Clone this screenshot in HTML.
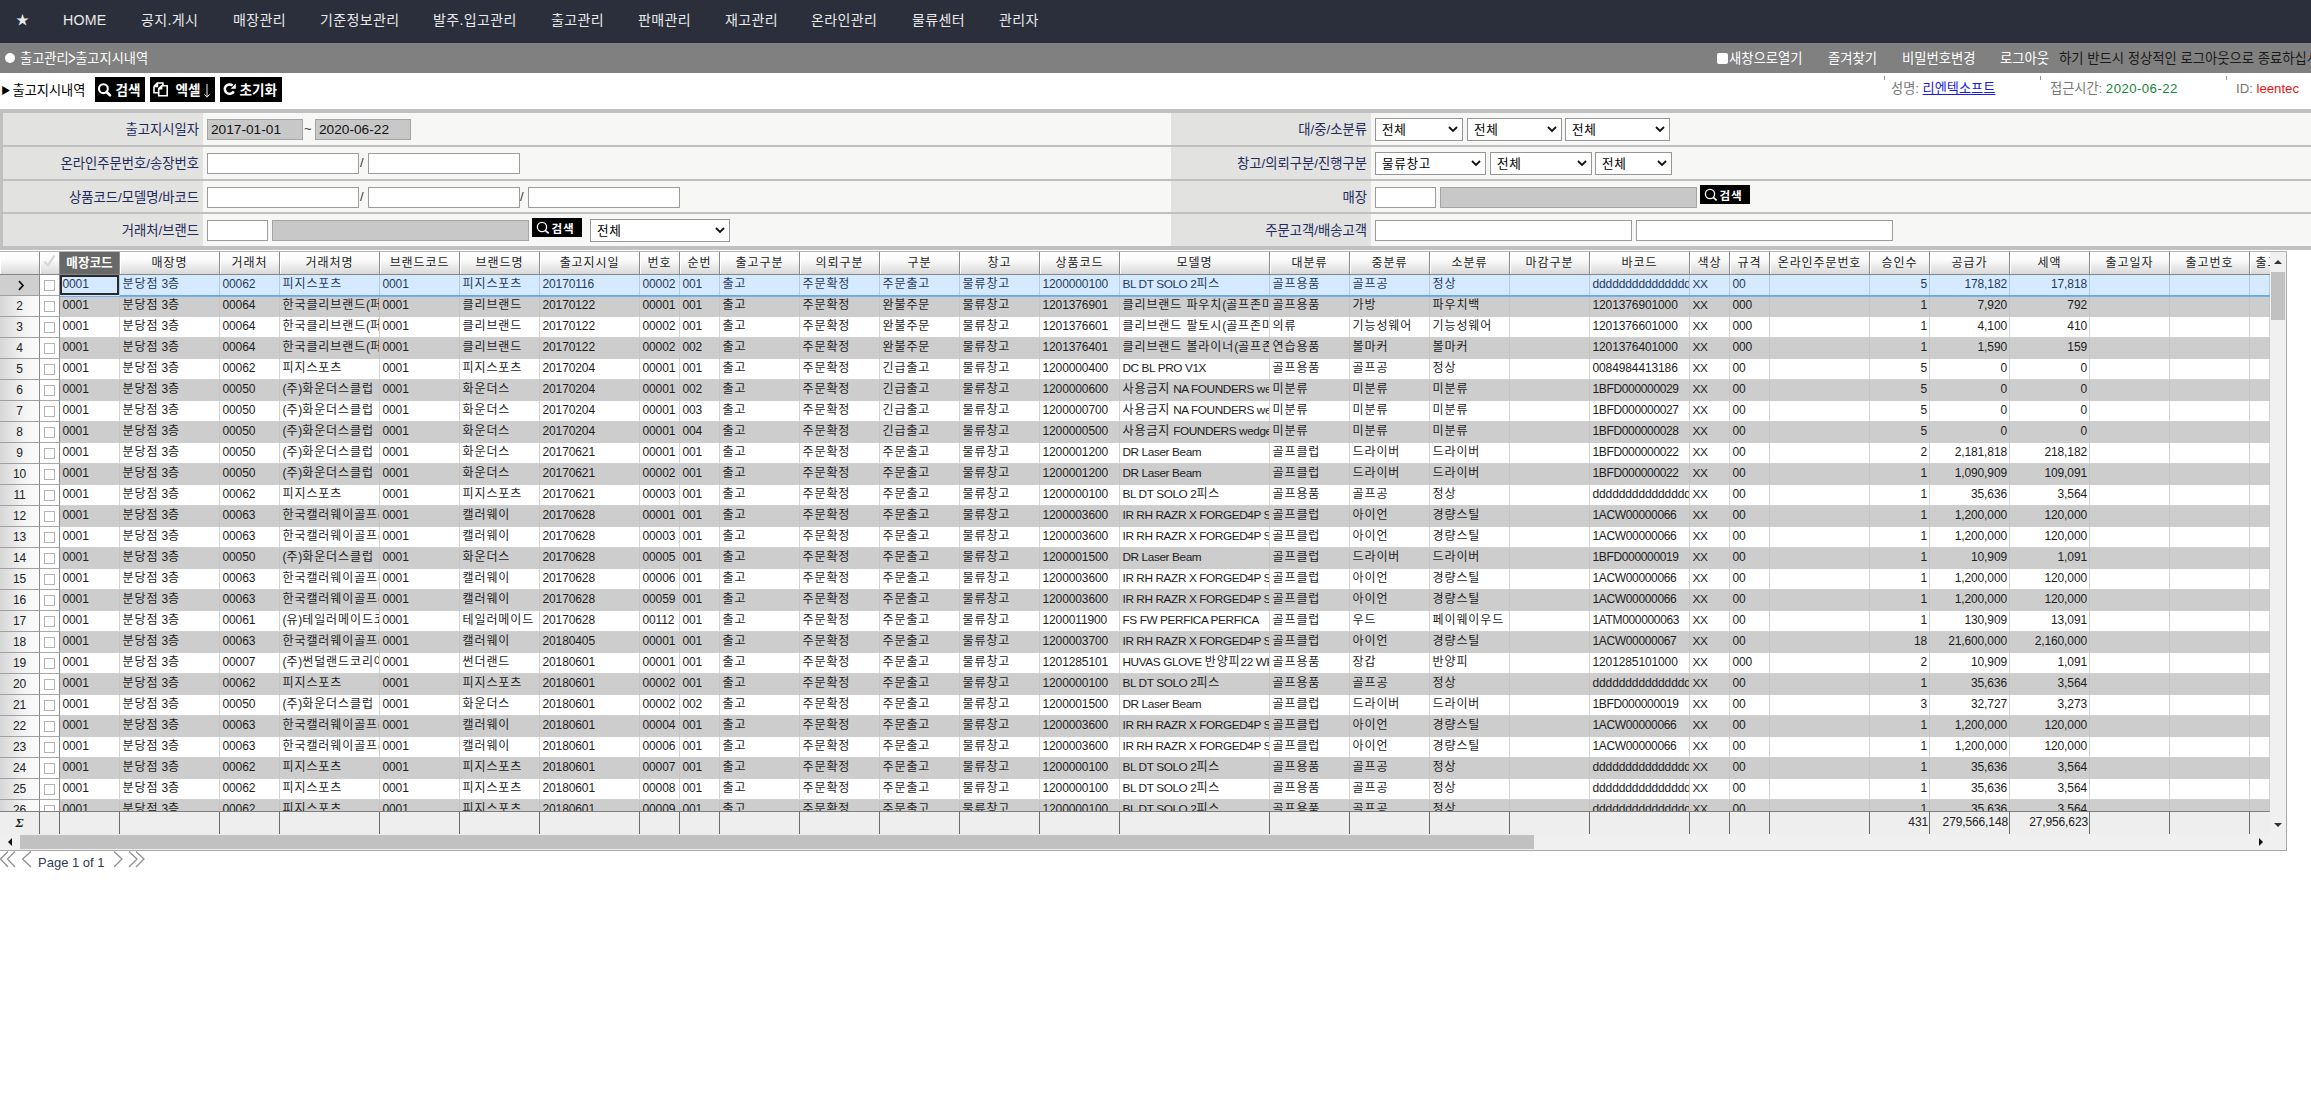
<!DOCTYPE html>
<html lang="ko"><head><meta charset="utf-8"><title>출고지시내역</title>
<style>
*{box-sizing:border-box}
html,body{margin:0;padding:0}
body{width:2311px;height:1105px;overflow:hidden;background:#fff;position:relative;font:13px "Liberation Sans","Noto Sans CJK KR",sans-serif;color:#000}
i{font-style:normal}
.abs{position:absolute;white-space:nowrap}
/* nav */
#nav{position:absolute;left:0;top:0;width:2311px;height:43px;background:#2b2f3b}
#nav a{position:absolute;top:0;height:43px;line-height:40px;color:#e9e9e9;font-size:14px;letter-spacing:0.35px;white-space:nowrap;text-decoration:none}
#nav a.en{letter-spacing:0.2px;font-size:14.2px}
/* grey bar */
#bar{position:absolute;left:0;top:43px;width:2311px;height:30px;background:#808080;color:#fff;font-size:13.33px;line-height:31px}
#bar span{position:absolute;top:0;white-space:nowrap}
#bar .dot{left:5px;top:10px;width:10px;height:10px;border-radius:50%;background:#fff}
#bar .cb{left:1717px;top:10px;width:11px;height:11px;background:#fff;border-radius:2px}
#bar .mq{color:#1a1a1a}
#bar .gt{position:static;display:inline-block;transform:scale(0.95,1.5);margin:0 -0.5px}
/* toolbar */
#tool{position:absolute;left:0;top:73px;width:2311px;height:36px;font-size:13.2px;line-height:35px}
#tool .ttl{position:absolute;left:0;top:0;white-space:nowrap}
.btn{position:absolute;top:4px;height:25px;background:#000;color:#fff;font-weight:bold;font-size:13.6px;line-height:24px;white-space:nowrap}
.btn svg{position:absolute}
.btn span{position:absolute;top:2px;margin-left:-0.5px}
#tool .ui{position:absolute;top:0;font-size:13.2px;color:#777;white-space:nowrap;line-height:32.5px}
#tool .ui .d{letter-spacing:0.45px}
#tool .tick{position:absolute;top:3px;width:1px;height:4px;background:#999}
/* filter */
#flt{position:absolute;left:0;top:109px;width:2311px;height:141px;background:#c0c0c0}
#flt .lb{position:absolute;height:32px;background:#e2e2e0;color:#222a5c;font-size:13.33px;line-height:34px;text-align:right;padding-right:4px;white-space:nowrap}
#flt .vl{position:absolute;height:32px;background:#f7f7f5}
#flt input, #flt .in{position:absolute;height:21px;border:1px solid #9c9c9c;background:#fff;font:13.33px "Liberation Sans","Noto Sans CJK KR",sans-serif;padding:0 0 0 3px;margin:0;color:#111;line-height:19px;border-radius:0;outline:0}
#flt .in.ro{background:#c8c8c8;border-color:#a4a4a4;font-size:13.7px}
#flt .sl{position:absolute;height:23px;border:1px solid #969696;background:#fff;font-size:12.6px;letter-spacing:0.7px;line-height:22.5px;padding-left:6px;color:#000;white-space:nowrap;border-radius:0}
#flt .sl svg{position:absolute;right:4px;top:7px}
#flt .sep{position:absolute;font-size:13px;color:#333;line-height:20px}
.sbtn{position:absolute;height:19px;width:50px;background:#000;color:#fff;font-weight:bold;font-size:11.6px;letter-spacing:0.8px;line-height:18px;white-space:nowrap}
.sbtn svg{position:absolute;left:4px;top:3px}
.sbtn span{position:absolute;left:19.5px;top:1.5px}
/* grid */
#grid{position:absolute;left:0;top:251px;width:2287px;height:600px;border-top:1px solid #b4b4b4;border-right:1px solid #a8a8a8;border-bottom:1px solid #a8a8a8;background:#fff;overflow:hidden;font-size:13px}
#grid i.n{font-size:12px;letter-spacing:-0.12px}
#grid i.m{font-size:12px;letter-spacing:-0.35px}
#grid i.a{font-size:11.8px;letter-spacing:-0.4px}
.hd{position:absolute;left:0;top:0;width:2270px;height:23px;overflow:hidden;z-index:3;border-bottom:1px solid #868686;background:linear-gradient(#fff,#fdfdfd 30%,#dcdcdc)}
.hc{position:absolute;top:0;height:22px;border-right:1px solid #8c8c8c;box-shadow:inset 1px 0 0 #fff;text-align:center;line-height:22px;white-space:nowrap;overflow:hidden;color:#222;font-size:12px;letter-spacing:0.9px;background:linear-gradient(#ffffff,#fbfbfb 35%,#d9d9d9)}
.hc.sel{background:#686868;color:#fff;font-weight:bold;letter-spacing:0;box-shadow:none;font-size:12.6px}
.hc.chk svg{position:absolute;left:0;top:0}
.bd{position:absolute;left:0;top:23px;width:2270px;height:536px;overflow:hidden;z-index:2}
.r{position:absolute;left:0;width:2270px;height:21px}
.r.e{background:#cdcdcd}
.r.s{background:#d6eaff}
.rh{position:absolute;left:0;top:0;width:40px;height:21px;border-right:1px solid #8a8a8a;border-bottom:1px solid #a0a0a0;background:linear-gradient(90deg,#d6d6d6,#f3f3f3 60%,#fcfcfc);text-align:center;line-height:20px;color:#222}
.r.s .rh{background:#cfcfcf}
.rh svg{position:absolute;left:16px;top:5px}
.ck{position:absolute;left:40px;top:0;width:20px;height:21px;background:#fff;border-right:1px solid #8a8a8a;border-bottom:1px solid #a8a8a8}
.ck b{position:absolute;left:4px;top:5px;width:11px;height:11px;border:1px solid #b4b4b4;background:#fff}
.c{position:absolute;top:0;height:21px;border-right:1px solid #d4d4d4;border-bottom:1px solid #d0d0d0;font-size:12px;letter-spacing:0.9px;padding:0 0 0 2.5px;line-height:18px;white-space:nowrap;overflow:hidden;color:#1c1c1c}
.r.e .c{border-right-color:#c5c5c5;border-bottom-color:#cdcdcd}
.r.s .c{border-right-color:#b4cbe4;border-bottom-color:#d6eaff;color:#1d3a5c}
.c.ra{text-align:right;padding:0 2px 0 0}
.c.foc{box-shadow:inset 0 0 0 2px #2a2a2a;z-index:4}
.selline{position:absolute;left:60px;top:20px;z-index:3;width:2210px;height:2px;background:linear-gradient(#62a2e5,#7fb4ec)}
.ft{position:absolute;left:0;top:559px;width:2270px;height:24px;background:#eee;border-top:1px solid #808080}
.fc{position:absolute;top:0;height:22px;border-right:1px solid #6a6a6a;line-height:20px;white-space:nowrap;overflow:hidden;color:#222}
.fc.ra{text-align:right;padding-right:1px}
.fc.last{border-right:0}
.sig{font:italic bold 13px "Liberation Serif",serif;line-height:22px}
.vs{position:absolute;left:2270px;top:0;width:16px;height:583px;background:#f0f0f0}
.vs .th{position:absolute;left:1px;top:20px;width:14px;height:48px;background:#c1c1c1}
.hs{position:absolute;left:0;top:583px;width:2286px;height:16px;background:#f0f0f0}
.hs .th{position:absolute;left:20px;top:0;width:1514px;height:14px;background:#c1c1c1}
.ar{position:absolute;width:0;height:0}
.ar.up{left:4px;top:8px;border-left:4px solid transparent;border-right:4px solid transparent;border-bottom:4px solid #333}
.ar.dn{left:4px;top:571px;border-left:4px solid transparent;border-right:4px solid transparent;border-top:4px solid #333}
.ar.lf{left:8px;top:3px;border-top:4px solid transparent;border-bottom:4px solid transparent;border-right:4px solid #111}
.ar.rt{left:2259px;top:3px;border-top:4px solid transparent;border-bottom:4px solid transparent;border-left:4px solid #111}
/* pager */
#pg{position:absolute;left:0;top:851px;width:300px;height:20px}
#pg svg{position:absolute;left:0;top:0}
#pg span{position:absolute;left:38px;top:2px;font:13px "Liberation Sans",sans-serif;color:#333c52;line-height:20px;white-space:nowrap}

</style></head>
<body>
<div id="nav">
<a style="left:16px;font-size:13px">★</a>
<a class="en" style="left:63px">HOME</a>
<a style="left:141px">공지.게시</a>
<a style="left:233px">매장관리</a>
<a style="left:320px">기준정보관리</a>
<a style="left:433px">발주.입고관리</a>
<a style="left:551px">출고관리</a>
<a style="left:638px">판매관리</a>
<a style="left:725px">재고관리</a>
<a style="left:811px">온라인관리</a>
<a style="left:912px">물류센터</a>
<a style="left:999px">관리자</a>
</div>
<div id="bar">
<span class="dot"></span>
<span style="left:20px;font-size:13.2px">출고관리<span class="gt">&gt;</span>출고지시내역</span>
<span class="cb"></span>
<span style="left:1729px">새창으로열기</span>
<span style="left:1828px">즐겨찾기</span>
<span style="left:1902px">비밀번호변경</span>
<span style="left:2000px">로그아웃</span>
<span class="mq" style="left:2059px">하기 반드시 정상적인 로그아웃으로 종료하십시오.</span>
</div>
<div id="tool">
<div class="ttl"><i style="font-size:9.5px;position:relative;top:-1px;margin-right:2px;margin-left:1px">▶</i>출고지시내역</div>
<div class="btn" style="left:95px;width:50px"><svg style="left:0;top:0" width="50" height="25" viewBox="0 0 50 25"><circle cx="8.4" cy="11.7" r="4.4" fill="none" stroke="#fff" stroke-width="2.1"/><path d="M11.6 15 L15 18.3" stroke="#fff" stroke-width="2.6" stroke-linecap="round"/></svg><span style="left:21px">검색</span></div>
<div class="btn" style="left:150px;width:65px"><svg style="left:0;top:0" width="65" height="25" viewBox="0 0 65 25"><path d="M4 9.4 L7.4 6 H12.9 V9 M4 9.4 H7.4 V6 M4 9.4 V15.8 H8.6" fill="none" stroke="#fff" stroke-width="1.6"/><path d="M8.7 11.6 L11.6 8.8 H17.2 V18.8 H8.7 Z M8.7 11.6 H11.6 V8.8" fill="none" stroke="#fff" stroke-width="1.6"/><path d="M57 7 V19.8 M54.4 17.4 L57 20.2 L59.6 17.4" fill="none" stroke="#e8f4f4" stroke-width="1"/></svg><span style="left:26px">엑셀</span></div>
<div class="btn" style="left:220px;width:62px"><svg style="left:0;top:0" width="62" height="25" viewBox="0 0 62 25"><path d="M13.7 14.3 A4.7 4.7 0 1 1 12.6 8.5" fill="none" stroke="#fff" stroke-width="2.5"/><path d="M15.8 6.6 V11.8 H10.6 Z" fill="#fff"/></svg><span style="left:20px">초기화</span></div>
<i class="tick" style="left:1884px"></i><i class="tick" style="left:2040px"></i><i class="tick" style="left:2226px"></i>
<div class="ui" style="left:1891px">성명: <span style="color:#1a1ae6;text-decoration:underline">리엔텍소프트</span></div>
<div class="ui" style="left:2050px">접근시간: <span class="d" style="color:#16883a">2020-06-22</span></div>
<div class="ui" style="left:2236px">ID: <span style="color:#f01010">leentec</span></div>
</div>
<div id="flt">
<!-- left labels -->
<div class="lb" style="left:3px;top:4px;width:200px">출고지시일자</div><div class="vl" style="left:203px;top:4px;width:968px"></div>
<div class="lb" style="left:3px;top:38px;width:200px">온라인주문번호/송장번호</div><div class="vl" style="left:203px;top:38px;width:968px"></div>
<div class="lb" style="left:3px;top:72px;width:200px;height:31px">상품코드/모델명/바코드</div><div class="vl" style="left:203px;top:72px;width:968px;height:31px"></div>
<div class="lb" style="left:3px;top:105px;width:200px">거래처/브랜드</div><div class="vl" style="left:203px;top:105px;width:968px"></div>
<!-- right labels -->
<div class="lb" style="left:1171px;top:4px;width:200px">대/중/소분류</div><div class="vl" style="left:1371px;top:4px;width:940px"></div>
<div class="lb" style="left:1171px;top:38px;width:200px">창고/의뢰구분/진행구분</div><div class="vl" style="left:1371px;top:38px;width:940px"></div>
<div class="lb" style="left:1171px;top:72px;width:200px;height:31px">매장</div><div class="vl" style="left:1371px;top:72px;width:940px;height:31px"></div>
<div class="lb" style="left:1171px;top:105px;width:200px">주문고객/배송고객</div><div class="vl" style="left:1371px;top:105px;width:940px"></div>
<!-- row1 left -->
<div class="in ro" style="left:207px;top:10px;width:96px">2017-01-01</div><div class="sep" style="left:304px;top:10px">~</div><div class="in ro" style="left:315px;top:10px;width:96px">2020-06-22</div>
<!-- row2 left -->
<div class="in" style="left:207px;top:44px;width:152px"></div><div class="sep" style="left:360px;top:44px">/</div><div class="in" style="left:368px;top:44px;width:152px"></div>
<!-- row3 left -->
<div class="in" style="left:207px;top:78px;width:152px"></div><div class="sep" style="left:360px;top:78px">/</div><div class="in" style="left:368px;top:78px;width:152px"></div><div class="sep" style="left:520px;top:78px">/</div><div class="in" style="left:528px;top:78px;width:152px"></div>
<!-- row4 left -->
<div class="in" style="left:207px;top:111px;width:61px"></div><div class="in ro" style="left:272px;top:111px;width:257px"></div>
<div class="sbtn" style="left:532px;top:109px"><svg width="14" height="14" viewBox="0 0 14 14"><circle cx="6" cy="6" r="4.6" fill="none" stroke="#fff" stroke-width="1.3"/><path d="M9.3 9.3 L12.7 12.3" stroke="#fff" stroke-width="1.6"/></svg><span>검색</span></div>
<div class="sl" style="left:590px;top:110px;width:140px">전체<svg width="10" height="7" viewBox="0 0 10 7"><path d="M1 1 L5 5 L9 1" fill="none" stroke="#111" stroke-width="1.8"/></svg></div>
<!-- row1 right -->
<div class="sl" style="left:1375px;top:9px;width:88px">전체<svg width="10" height="7" viewBox="0 0 10 7"><path d="M1 1 L5 5 L9 1" fill="none" stroke="#111" stroke-width="1.8"/></svg></div>
<div class="sl" style="left:1467px;top:9px;width:95px">전체<svg width="10" height="7" viewBox="0 0 10 7"><path d="M1 1 L5 5 L9 1" fill="none" stroke="#111" stroke-width="1.8"/></svg></div>
<div class="sl" style="left:1565px;top:9px;width:105px">전체<svg width="10" height="7" viewBox="0 0 10 7"><path d="M1 1 L5 5 L9 1" fill="none" stroke="#111" stroke-width="1.8"/></svg></div>
<!-- row2 right -->
<div class="sl" style="left:1375px;top:43px;width:111px">물류창고<svg width="10" height="7" viewBox="0 0 10 7"><path d="M1 1 L5 5 L9 1" fill="none" stroke="#111" stroke-width="1.8"/></svg></div>
<div class="sl" style="left:1490px;top:43px;width:102px">전체<svg width="10" height="7" viewBox="0 0 10 7"><path d="M1 1 L5 5 L9 1" fill="none" stroke="#111" stroke-width="1.8"/></svg></div>
<div class="sl" style="left:1595px;top:43px;width:77px">전체<svg width="10" height="7" viewBox="0 0 10 7"><path d="M1 1 L5 5 L9 1" fill="none" stroke="#111" stroke-width="1.8"/></svg></div>
<!-- row3 right -->
<div class="in" style="left:1375px;top:78px;width:61px"></div><div class="in ro" style="left:1440px;top:78px;width:257px"></div>
<div class="sbtn" style="left:1700px;top:76px"><svg width="14" height="14" viewBox="0 0 14 14"><circle cx="6" cy="6" r="4.6" fill="none" stroke="#fff" stroke-width="1.3"/><path d="M9.3 9.3 L12.7 12.3" stroke="#fff" stroke-width="1.6"/></svg><span>검색</span></div>
<!-- row4 right -->
<div class="in" style="left:1375px;top:111px;width:257px"></div><div class="in" style="left:1636px;top:111px;width:257px"></div>
</div>
<div id="grid">
<div class="hd">
<div class="hc" style="left:0;width:40px"></div>
<div class="hc chk" style="left:40px;width:20px"><svg width="20" height="22" viewBox="0 0 20 22"><path d="M4.5 9.8 L8 13.4 L14.4 3.6" fill="none" stroke="#d6d6d6" stroke-width="2.1"/></svg></div>
<div class="hc sel" style="left:60px;width:60px">매장코드</div>
<div class="hc" style="left:120px;width:100px">매장명</div>
<div class="hc" style="left:220px;width:60px">거래처</div>
<div class="hc" style="left:280px;width:100px">거래처명</div>
<div class="hc" style="left:380px;width:80px">브랜드코드</div>
<div class="hc" style="left:460px;width:80px">브랜드명</div>
<div class="hc" style="left:540px;width:100px">출고지시일</div>
<div class="hc" style="left:640px;width:40px">번호</div>
<div class="hc" style="left:680px;width:40px">순번</div>
<div class="hc" style="left:720px;width:80px">출고구분</div>
<div class="hc" style="left:800px;width:80px">의뢰구분</div>
<div class="hc" style="left:880px;width:80px">구분</div>
<div class="hc" style="left:960px;width:80px">창고</div>
<div class="hc" style="left:1040px;width:80px">상품코드</div>
<div class="hc" style="left:1120px;width:150px">모델명</div>
<div class="hc" style="left:1270px;width:80px">대분류</div>
<div class="hc" style="left:1350px;width:80px">중분류</div>
<div class="hc" style="left:1430px;width:80px">소분류</div>
<div class="hc" style="left:1510px;width:80px">마감구분</div>
<div class="hc" style="left:1590px;width:100px">바코드</div>
<div class="hc" style="left:1690px;width:40px">색상</div>
<div class="hc" style="left:1730px;width:40px">규격</div>
<div class="hc" style="left:1770px;width:100px">온라인주문번호</div>
<div class="hc" style="left:1870px;width:60px">승인수</div>
<div class="hc" style="left:1930px;width:80px">공급가</div>
<div class="hc" style="left:2010px;width:80px">세액</div>
<div class="hc" style="left:2090px;width:80px">출고일자</div>
<div class="hc" style="left:2170px;width:80px">출고번호</div>
<div class="hc" style="left:2250px;width:60px">출고순번</div>
</div>
<div class="bd">
<div class="r s" style="top:0px">
<div class="rh"><svg width="9" height="11" viewBox="0 0 9 11"><path d="M3 1.2 L7 5.5 L3 9.8" fill="none" stroke="#111" stroke-width="1.7"/></svg></div><div class="ck"><b></b></div>
<div class="c foc" style="left:60px;width:60px"><i class="n">0001</i></div>
<div class="c" style="left:120px;width:100px">분당점<i class="n"> 3</i>층</div>
<div class="c" style="left:220px;width:60px"><i class="n">00062</i></div>
<div class="c" style="left:280px;width:100px">피지스포츠</div>
<div class="c" style="left:380px;width:80px"><i class="n">0001</i></div>
<div class="c" style="left:460px;width:80px">피지스포츠</div>
<div class="c" style="left:540px;width:100px"><i class="n">20170116</i></div>
<div class="c" style="left:640px;width:40px"><i class="n">00002</i></div>
<div class="c" style="left:680px;width:40px"><i class="n">001</i></div>
<div class="c" style="left:720px;width:80px">출고</div>
<div class="c" style="left:800px;width:80px">주문확정</div>
<div class="c" style="left:880px;width:80px">주문출고</div>
<div class="c" style="left:960px;width:80px">물류창고</div>
<div class="c" style="left:1040px;width:80px"><i class="n">1200000100</i></div>
<div class="c" style="left:1120px;width:150px"><i class="a">BL DT SOLO 2</i>피스</div>
<div class="c" style="left:1270px;width:80px">골프용품</div>
<div class="c" style="left:1350px;width:80px">골프공</div>
<div class="c" style="left:1430px;width:80px">정상</div>
<div class="c" style="left:1510px;width:80px"></div>
<div class="c" style="left:1590px;width:100px"><i class="n">dddddddddddddddddd</i></div>
<div class="c" style="left:1690px;width:40px"><i class="a">XX</i></div>
<div class="c" style="left:1730px;width:40px"><i class="n">00</i></div>
<div class="c" style="left:1770px;width:100px"></div>
<div class="c ra" style="left:1870px;width:60px"><i class="n">5</i></div>
<div class="c ra" style="left:1930px;width:80px"><i class="n">178,182</i></div>
<div class="c ra" style="left:2010px;width:80px"><i class="n">17,818</i></div>
<div class="c" style="left:2090px;width:80px"></div>
<div class="c" style="left:2170px;width:80px"></div>
<div class="c" style="left:2250px;width:20px"></div>
</div>
<div class="r e" style="top:21px">
<div class="rh"><i class="n">2</i></div><div class="ck"><b></b></div>
<div class="c" style="left:60px;width:60px"><i class="n">0001</i></div>
<div class="c" style="left:120px;width:100px">분당점<i class="n"> 3</i>층</div>
<div class="c" style="left:220px;width:60px"><i class="n">00064</i></div>
<div class="c" style="left:280px;width:100px">한국클리브랜드<i class="n">(</i>퍼시픽<i class="n">)</i></div>
<div class="c" style="left:380px;width:80px"><i class="n">0001</i></div>
<div class="c" style="left:460px;width:80px">클리브랜드</div>
<div class="c" style="left:540px;width:100px"><i class="n">20170122</i></div>
<div class="c" style="left:640px;width:40px"><i class="n">00001</i></div>
<div class="c" style="left:680px;width:40px"><i class="n">001</i></div>
<div class="c" style="left:720px;width:80px">출고</div>
<div class="c" style="left:800px;width:80px">주문확정</div>
<div class="c" style="left:880px;width:80px">완불주문</div>
<div class="c" style="left:960px;width:80px">물류창고</div>
<div class="c" style="left:1040px;width:80px"><i class="n">1201376901</i></div>
<div class="c" style="left:1120px;width:150px">클리브랜드 파우치<i class="n">(</i>골프존마켓<i class="n">)</i></div>
<div class="c" style="left:1270px;width:80px">골프용품</div>
<div class="c" style="left:1350px;width:80px">가방</div>
<div class="c" style="left:1430px;width:80px">파우치백</div>
<div class="c" style="left:1510px;width:80px"></div>
<div class="c" style="left:1590px;width:100px"><i class="n">1201376901000</i></div>
<div class="c" style="left:1690px;width:40px"><i class="a">XX</i></div>
<div class="c" style="left:1730px;width:40px"><i class="n">000</i></div>
<div class="c" style="left:1770px;width:100px"></div>
<div class="c ra" style="left:1870px;width:60px"><i class="n">1</i></div>
<div class="c ra" style="left:1930px;width:80px"><i class="n">7,920</i></div>
<div class="c ra" style="left:2010px;width:80px"><i class="n">792</i></div>
<div class="c" style="left:2090px;width:80px"></div>
<div class="c" style="left:2170px;width:80px"></div>
<div class="c" style="left:2250px;width:20px"></div>
</div>
<div class="r o" style="top:42px">
<div class="rh"><i class="n">3</i></div><div class="ck"><b></b></div>
<div class="c" style="left:60px;width:60px"><i class="n">0001</i></div>
<div class="c" style="left:120px;width:100px">분당점<i class="n"> 3</i>층</div>
<div class="c" style="left:220px;width:60px"><i class="n">00064</i></div>
<div class="c" style="left:280px;width:100px">한국클리브랜드<i class="n">(</i>퍼시픽<i class="n">)</i></div>
<div class="c" style="left:380px;width:80px"><i class="n">0001</i></div>
<div class="c" style="left:460px;width:80px">클리브랜드</div>
<div class="c" style="left:540px;width:100px"><i class="n">20170122</i></div>
<div class="c" style="left:640px;width:40px"><i class="n">00002</i></div>
<div class="c" style="left:680px;width:40px"><i class="n">001</i></div>
<div class="c" style="left:720px;width:80px">출고</div>
<div class="c" style="left:800px;width:80px">주문확정</div>
<div class="c" style="left:880px;width:80px">완불주문</div>
<div class="c" style="left:960px;width:80px">물류창고</div>
<div class="c" style="left:1040px;width:80px"><i class="n">1201376601</i></div>
<div class="c" style="left:1120px;width:150px">클리브랜드 팔토시<i class="n">(</i>골프존마켓<i class="n">)</i></div>
<div class="c" style="left:1270px;width:80px">의류</div>
<div class="c" style="left:1350px;width:80px">기능성웨어</div>
<div class="c" style="left:1430px;width:80px">기능성웨어</div>
<div class="c" style="left:1510px;width:80px"></div>
<div class="c" style="left:1590px;width:100px"><i class="n">1201376601000</i></div>
<div class="c" style="left:1690px;width:40px"><i class="a">XX</i></div>
<div class="c" style="left:1730px;width:40px"><i class="n">000</i></div>
<div class="c" style="left:1770px;width:100px"></div>
<div class="c ra" style="left:1870px;width:60px"><i class="n">1</i></div>
<div class="c ra" style="left:1930px;width:80px"><i class="n">4,100</i></div>
<div class="c ra" style="left:2010px;width:80px"><i class="n">410</i></div>
<div class="c" style="left:2090px;width:80px"></div>
<div class="c" style="left:2170px;width:80px"></div>
<div class="c" style="left:2250px;width:20px"></div>
</div>
<div class="r e" style="top:63px">
<div class="rh"><i class="n">4</i></div><div class="ck"><b></b></div>
<div class="c" style="left:60px;width:60px"><i class="n">0001</i></div>
<div class="c" style="left:120px;width:100px">분당점<i class="n"> 3</i>층</div>
<div class="c" style="left:220px;width:60px"><i class="n">00064</i></div>
<div class="c" style="left:280px;width:100px">한국클리브랜드<i class="n">(</i>퍼시픽<i class="n">)</i></div>
<div class="c" style="left:380px;width:80px"><i class="n">0001</i></div>
<div class="c" style="left:460px;width:80px">클리브랜드</div>
<div class="c" style="left:540px;width:100px"><i class="n">20170122</i></div>
<div class="c" style="left:640px;width:40px"><i class="n">00002</i></div>
<div class="c" style="left:680px;width:40px"><i class="n">002</i></div>
<div class="c" style="left:720px;width:80px">출고</div>
<div class="c" style="left:800px;width:80px">주문확정</div>
<div class="c" style="left:880px;width:80px">완불주문</div>
<div class="c" style="left:960px;width:80px">물류창고</div>
<div class="c" style="left:1040px;width:80px"><i class="n">1201376401</i></div>
<div class="c" style="left:1120px;width:150px">클리브랜드 볼라이너<i class="n">(</i>골프존마켓<i class="n">)</i></div>
<div class="c" style="left:1270px;width:80px">연습용품</div>
<div class="c" style="left:1350px;width:80px">볼마커</div>
<div class="c" style="left:1430px;width:80px">볼마커</div>
<div class="c" style="left:1510px;width:80px"></div>
<div class="c" style="left:1590px;width:100px"><i class="n">1201376401000</i></div>
<div class="c" style="left:1690px;width:40px"><i class="a">XX</i></div>
<div class="c" style="left:1730px;width:40px"><i class="n">000</i></div>
<div class="c" style="left:1770px;width:100px"></div>
<div class="c ra" style="left:1870px;width:60px"><i class="n">1</i></div>
<div class="c ra" style="left:1930px;width:80px"><i class="n">1,590</i></div>
<div class="c ra" style="left:2010px;width:80px"><i class="n">159</i></div>
<div class="c" style="left:2090px;width:80px"></div>
<div class="c" style="left:2170px;width:80px"></div>
<div class="c" style="left:2250px;width:20px"></div>
</div>
<div class="r o" style="top:84px">
<div class="rh"><i class="n">5</i></div><div class="ck"><b></b></div>
<div class="c" style="left:60px;width:60px"><i class="n">0001</i></div>
<div class="c" style="left:120px;width:100px">분당점<i class="n"> 3</i>층</div>
<div class="c" style="left:220px;width:60px"><i class="n">00062</i></div>
<div class="c" style="left:280px;width:100px">피지스포츠</div>
<div class="c" style="left:380px;width:80px"><i class="n">0001</i></div>
<div class="c" style="left:460px;width:80px">피지스포츠</div>
<div class="c" style="left:540px;width:100px"><i class="n">20170204</i></div>
<div class="c" style="left:640px;width:40px"><i class="n">00001</i></div>
<div class="c" style="left:680px;width:40px"><i class="n">001</i></div>
<div class="c" style="left:720px;width:80px">출고</div>
<div class="c" style="left:800px;width:80px">주문확정</div>
<div class="c" style="left:880px;width:80px">긴급출고</div>
<div class="c" style="left:960px;width:80px">물류창고</div>
<div class="c" style="left:1040px;width:80px"><i class="n">1200000400</i></div>
<div class="c" style="left:1120px;width:150px"><i class="a">DC BL PRO V1X</i></div>
<div class="c" style="left:1270px;width:80px">골프용품</div>
<div class="c" style="left:1350px;width:80px">골프공</div>
<div class="c" style="left:1430px;width:80px">정상</div>
<div class="c" style="left:1510px;width:80px"></div>
<div class="c" style="left:1590px;width:100px"><i class="n">0084984413186</i></div>
<div class="c" style="left:1690px;width:40px"><i class="a">XX</i></div>
<div class="c" style="left:1730px;width:40px"><i class="n">00</i></div>
<div class="c" style="left:1770px;width:100px"></div>
<div class="c ra" style="left:1870px;width:60px"><i class="n">5</i></div>
<div class="c ra" style="left:1930px;width:80px"><i class="n">0</i></div>
<div class="c ra" style="left:2010px;width:80px"><i class="n">0</i></div>
<div class="c" style="left:2090px;width:80px"></div>
<div class="c" style="left:2170px;width:80px"></div>
<div class="c" style="left:2250px;width:20px"></div>
</div>
<div class="r e" style="top:105px">
<div class="rh"><i class="n">6</i></div><div class="ck"><b></b></div>
<div class="c" style="left:60px;width:60px"><i class="n">0001</i></div>
<div class="c" style="left:120px;width:100px">분당점<i class="n"> 3</i>층</div>
<div class="c" style="left:220px;width:60px"><i class="n">00050</i></div>
<div class="c" style="left:280px;width:100px"><i class="n">(</i>주<i class="n">)</i>화운더스클럽</div>
<div class="c" style="left:380px;width:80px"><i class="n">0001</i></div>
<div class="c" style="left:460px;width:80px">화운더스</div>
<div class="c" style="left:540px;width:100px"><i class="n">20170204</i></div>
<div class="c" style="left:640px;width:40px"><i class="n">00001</i></div>
<div class="c" style="left:680px;width:40px"><i class="n">002</i></div>
<div class="c" style="left:720px;width:80px">출고</div>
<div class="c" style="left:800px;width:80px">주문확정</div>
<div class="c" style="left:880px;width:80px">긴급출고</div>
<div class="c" style="left:960px;width:80px">물류창고</div>
<div class="c" style="left:1040px;width:80px"><i class="n">1200000600</i></div>
<div class="c" style="left:1120px;width:150px">사용금지<i class="a"> NA FOUNDERS wedge 52</i></div>
<div class="c" style="left:1270px;width:80px">미분류</div>
<div class="c" style="left:1350px;width:80px">미분류</div>
<div class="c" style="left:1430px;width:80px">미분류</div>
<div class="c" style="left:1510px;width:80px"></div>
<div class="c" style="left:1590px;width:100px"><i class="m">1BFD000000029</i></div>
<div class="c" style="left:1690px;width:40px"><i class="a">XX</i></div>
<div class="c" style="left:1730px;width:40px"><i class="n">00</i></div>
<div class="c" style="left:1770px;width:100px"></div>
<div class="c ra" style="left:1870px;width:60px"><i class="n">5</i></div>
<div class="c ra" style="left:1930px;width:80px"><i class="n">0</i></div>
<div class="c ra" style="left:2010px;width:80px"><i class="n">0</i></div>
<div class="c" style="left:2090px;width:80px"></div>
<div class="c" style="left:2170px;width:80px"></div>
<div class="c" style="left:2250px;width:20px"></div>
</div>
<div class="r o" style="top:126px">
<div class="rh"><i class="n">7</i></div><div class="ck"><b></b></div>
<div class="c" style="left:60px;width:60px"><i class="n">0001</i></div>
<div class="c" style="left:120px;width:100px">분당점<i class="n"> 3</i>층</div>
<div class="c" style="left:220px;width:60px"><i class="n">00050</i></div>
<div class="c" style="left:280px;width:100px"><i class="n">(</i>주<i class="n">)</i>화운더스클럽</div>
<div class="c" style="left:380px;width:80px"><i class="n">0001</i></div>
<div class="c" style="left:460px;width:80px">화운더스</div>
<div class="c" style="left:540px;width:100px"><i class="n">20170204</i></div>
<div class="c" style="left:640px;width:40px"><i class="n">00001</i></div>
<div class="c" style="left:680px;width:40px"><i class="n">003</i></div>
<div class="c" style="left:720px;width:80px">출고</div>
<div class="c" style="left:800px;width:80px">주문확정</div>
<div class="c" style="left:880px;width:80px">긴급출고</div>
<div class="c" style="left:960px;width:80px">물류창고</div>
<div class="c" style="left:1040px;width:80px"><i class="n">1200000700</i></div>
<div class="c" style="left:1120px;width:150px">사용금지<i class="a"> NA FOUNDERS wedge 56</i></div>
<div class="c" style="left:1270px;width:80px">미분류</div>
<div class="c" style="left:1350px;width:80px">미분류</div>
<div class="c" style="left:1430px;width:80px">미분류</div>
<div class="c" style="left:1510px;width:80px"></div>
<div class="c" style="left:1590px;width:100px"><i class="m">1BFD000000027</i></div>
<div class="c" style="left:1690px;width:40px"><i class="a">XX</i></div>
<div class="c" style="left:1730px;width:40px"><i class="n">00</i></div>
<div class="c" style="left:1770px;width:100px"></div>
<div class="c ra" style="left:1870px;width:60px"><i class="n">5</i></div>
<div class="c ra" style="left:1930px;width:80px"><i class="n">0</i></div>
<div class="c ra" style="left:2010px;width:80px"><i class="n">0</i></div>
<div class="c" style="left:2090px;width:80px"></div>
<div class="c" style="left:2170px;width:80px"></div>
<div class="c" style="left:2250px;width:20px"></div>
</div>
<div class="r e" style="top:147px">
<div class="rh"><i class="n">8</i></div><div class="ck"><b></b></div>
<div class="c" style="left:60px;width:60px"><i class="n">0001</i></div>
<div class="c" style="left:120px;width:100px">분당점<i class="n"> 3</i>층</div>
<div class="c" style="left:220px;width:60px"><i class="n">00050</i></div>
<div class="c" style="left:280px;width:100px"><i class="n">(</i>주<i class="n">)</i>화운더스클럽</div>
<div class="c" style="left:380px;width:80px"><i class="n">0001</i></div>
<div class="c" style="left:460px;width:80px">화운더스</div>
<div class="c" style="left:540px;width:100px"><i class="n">20170204</i></div>
<div class="c" style="left:640px;width:40px"><i class="n">00001</i></div>
<div class="c" style="left:680px;width:40px"><i class="n">004</i></div>
<div class="c" style="left:720px;width:80px">출고</div>
<div class="c" style="left:800px;width:80px">주문확정</div>
<div class="c" style="left:880px;width:80px">긴급출고</div>
<div class="c" style="left:960px;width:80px">물류창고</div>
<div class="c" style="left:1040px;width:80px"><i class="n">1200000500</i></div>
<div class="c" style="left:1120px;width:150px">사용금지<i class="a"> FOUNDERS wedge 60</i></div>
<div class="c" style="left:1270px;width:80px">미분류</div>
<div class="c" style="left:1350px;width:80px">미분류</div>
<div class="c" style="left:1430px;width:80px">미분류</div>
<div class="c" style="left:1510px;width:80px"></div>
<div class="c" style="left:1590px;width:100px"><i class="m">1BFD000000028</i></div>
<div class="c" style="left:1690px;width:40px"><i class="a">XX</i></div>
<div class="c" style="left:1730px;width:40px"><i class="n">00</i></div>
<div class="c" style="left:1770px;width:100px"></div>
<div class="c ra" style="left:1870px;width:60px"><i class="n">5</i></div>
<div class="c ra" style="left:1930px;width:80px"><i class="n">0</i></div>
<div class="c ra" style="left:2010px;width:80px"><i class="n">0</i></div>
<div class="c" style="left:2090px;width:80px"></div>
<div class="c" style="left:2170px;width:80px"></div>
<div class="c" style="left:2250px;width:20px"></div>
</div>
<div class="r o" style="top:168px">
<div class="rh"><i class="n">9</i></div><div class="ck"><b></b></div>
<div class="c" style="left:60px;width:60px"><i class="n">0001</i></div>
<div class="c" style="left:120px;width:100px">분당점<i class="n"> 3</i>층</div>
<div class="c" style="left:220px;width:60px"><i class="n">00050</i></div>
<div class="c" style="left:280px;width:100px"><i class="n">(</i>주<i class="n">)</i>화운더스클럽</div>
<div class="c" style="left:380px;width:80px"><i class="n">0001</i></div>
<div class="c" style="left:460px;width:80px">화운더스</div>
<div class="c" style="left:540px;width:100px"><i class="n">20170621</i></div>
<div class="c" style="left:640px;width:40px"><i class="n">00001</i></div>
<div class="c" style="left:680px;width:40px"><i class="n">001</i></div>
<div class="c" style="left:720px;width:80px">출고</div>
<div class="c" style="left:800px;width:80px">주문확정</div>
<div class="c" style="left:880px;width:80px">주문출고</div>
<div class="c" style="left:960px;width:80px">물류창고</div>
<div class="c" style="left:1040px;width:80px"><i class="n">1200001200</i></div>
<div class="c" style="left:1120px;width:150px"><i class="a">DR Laser Beam</i></div>
<div class="c" style="left:1270px;width:80px">골프클럽</div>
<div class="c" style="left:1350px;width:80px">드라이버</div>
<div class="c" style="left:1430px;width:80px">드라이버</div>
<div class="c" style="left:1510px;width:80px"></div>
<div class="c" style="left:1590px;width:100px"><i class="m">1BFD000000022</i></div>
<div class="c" style="left:1690px;width:40px"><i class="a">XX</i></div>
<div class="c" style="left:1730px;width:40px"><i class="n">00</i></div>
<div class="c" style="left:1770px;width:100px"></div>
<div class="c ra" style="left:1870px;width:60px"><i class="n">2</i></div>
<div class="c ra" style="left:1930px;width:80px"><i class="n">2,181,818</i></div>
<div class="c ra" style="left:2010px;width:80px"><i class="n">218,182</i></div>
<div class="c" style="left:2090px;width:80px"></div>
<div class="c" style="left:2170px;width:80px"></div>
<div class="c" style="left:2250px;width:20px"></div>
</div>
<div class="r e" style="top:189px">
<div class="rh"><i class="n">10</i></div><div class="ck"><b></b></div>
<div class="c" style="left:60px;width:60px"><i class="n">0001</i></div>
<div class="c" style="left:120px;width:100px">분당점<i class="n"> 3</i>층</div>
<div class="c" style="left:220px;width:60px"><i class="n">00050</i></div>
<div class="c" style="left:280px;width:100px"><i class="n">(</i>주<i class="n">)</i>화운더스클럽</div>
<div class="c" style="left:380px;width:80px"><i class="n">0001</i></div>
<div class="c" style="left:460px;width:80px">화운더스</div>
<div class="c" style="left:540px;width:100px"><i class="n">20170621</i></div>
<div class="c" style="left:640px;width:40px"><i class="n">00002</i></div>
<div class="c" style="left:680px;width:40px"><i class="n">001</i></div>
<div class="c" style="left:720px;width:80px">출고</div>
<div class="c" style="left:800px;width:80px">주문확정</div>
<div class="c" style="left:880px;width:80px">주문출고</div>
<div class="c" style="left:960px;width:80px">물류창고</div>
<div class="c" style="left:1040px;width:80px"><i class="n">1200001200</i></div>
<div class="c" style="left:1120px;width:150px"><i class="a">DR Laser Beam</i></div>
<div class="c" style="left:1270px;width:80px">골프클럽</div>
<div class="c" style="left:1350px;width:80px">드라이버</div>
<div class="c" style="left:1430px;width:80px">드라이버</div>
<div class="c" style="left:1510px;width:80px"></div>
<div class="c" style="left:1590px;width:100px"><i class="m">1BFD000000022</i></div>
<div class="c" style="left:1690px;width:40px"><i class="a">XX</i></div>
<div class="c" style="left:1730px;width:40px"><i class="n">00</i></div>
<div class="c" style="left:1770px;width:100px"></div>
<div class="c ra" style="left:1870px;width:60px"><i class="n">1</i></div>
<div class="c ra" style="left:1930px;width:80px"><i class="n">1,090,909</i></div>
<div class="c ra" style="left:2010px;width:80px"><i class="n">109,091</i></div>
<div class="c" style="left:2090px;width:80px"></div>
<div class="c" style="left:2170px;width:80px"></div>
<div class="c" style="left:2250px;width:20px"></div>
</div>
<div class="r o" style="top:210px">
<div class="rh"><i class="n">11</i></div><div class="ck"><b></b></div>
<div class="c" style="left:60px;width:60px"><i class="n">0001</i></div>
<div class="c" style="left:120px;width:100px">분당점<i class="n"> 3</i>층</div>
<div class="c" style="left:220px;width:60px"><i class="n">00062</i></div>
<div class="c" style="left:280px;width:100px">피지스포츠</div>
<div class="c" style="left:380px;width:80px"><i class="n">0001</i></div>
<div class="c" style="left:460px;width:80px">피지스포츠</div>
<div class="c" style="left:540px;width:100px"><i class="n">20170621</i></div>
<div class="c" style="left:640px;width:40px"><i class="n">00003</i></div>
<div class="c" style="left:680px;width:40px"><i class="n">001</i></div>
<div class="c" style="left:720px;width:80px">출고</div>
<div class="c" style="left:800px;width:80px">주문확정</div>
<div class="c" style="left:880px;width:80px">주문출고</div>
<div class="c" style="left:960px;width:80px">물류창고</div>
<div class="c" style="left:1040px;width:80px"><i class="n">1200000100</i></div>
<div class="c" style="left:1120px;width:150px"><i class="a">BL DT SOLO 2</i>피스</div>
<div class="c" style="left:1270px;width:80px">골프용품</div>
<div class="c" style="left:1350px;width:80px">골프공</div>
<div class="c" style="left:1430px;width:80px">정상</div>
<div class="c" style="left:1510px;width:80px"></div>
<div class="c" style="left:1590px;width:100px"><i class="n">dddddddddddddddddd</i></div>
<div class="c" style="left:1690px;width:40px"><i class="a">XX</i></div>
<div class="c" style="left:1730px;width:40px"><i class="n">00</i></div>
<div class="c" style="left:1770px;width:100px"></div>
<div class="c ra" style="left:1870px;width:60px"><i class="n">1</i></div>
<div class="c ra" style="left:1930px;width:80px"><i class="n">35,636</i></div>
<div class="c ra" style="left:2010px;width:80px"><i class="n">3,564</i></div>
<div class="c" style="left:2090px;width:80px"></div>
<div class="c" style="left:2170px;width:80px"></div>
<div class="c" style="left:2250px;width:20px"></div>
</div>
<div class="r e" style="top:231px">
<div class="rh"><i class="n">12</i></div><div class="ck"><b></b></div>
<div class="c" style="left:60px;width:60px"><i class="n">0001</i></div>
<div class="c" style="left:120px;width:100px">분당점<i class="n"> 3</i>층</div>
<div class="c" style="left:220px;width:60px"><i class="n">00063</i></div>
<div class="c" style="left:280px;width:100px">한국캘러웨이골프<i class="n">(</i>유<i class="n">)</i></div>
<div class="c" style="left:380px;width:80px"><i class="n">0001</i></div>
<div class="c" style="left:460px;width:80px">캘러웨이</div>
<div class="c" style="left:540px;width:100px"><i class="n">20170628</i></div>
<div class="c" style="left:640px;width:40px"><i class="n">00001</i></div>
<div class="c" style="left:680px;width:40px"><i class="n">001</i></div>
<div class="c" style="left:720px;width:80px">출고</div>
<div class="c" style="left:800px;width:80px">주문확정</div>
<div class="c" style="left:880px;width:80px">주문출고</div>
<div class="c" style="left:960px;width:80px">물류창고</div>
<div class="c" style="left:1040px;width:80px"><i class="n">1200003600</i></div>
<div class="c" style="left:1120px;width:150px"><i class="a">IR RH RAZR X FORGED4P STEEL</i></div>
<div class="c" style="left:1270px;width:80px">골프클럽</div>
<div class="c" style="left:1350px;width:80px">아이언</div>
<div class="c" style="left:1430px;width:80px">경량스틸</div>
<div class="c" style="left:1510px;width:80px"></div>
<div class="c" style="left:1590px;width:100px"><i class="m">1ACW00000066</i></div>
<div class="c" style="left:1690px;width:40px"><i class="a">XX</i></div>
<div class="c" style="left:1730px;width:40px"><i class="n">00</i></div>
<div class="c" style="left:1770px;width:100px"></div>
<div class="c ra" style="left:1870px;width:60px"><i class="n">1</i></div>
<div class="c ra" style="left:1930px;width:80px"><i class="n">1,200,000</i></div>
<div class="c ra" style="left:2010px;width:80px"><i class="n">120,000</i></div>
<div class="c" style="left:2090px;width:80px"></div>
<div class="c" style="left:2170px;width:80px"></div>
<div class="c" style="left:2250px;width:20px"></div>
</div>
<div class="r o" style="top:252px">
<div class="rh"><i class="n">13</i></div><div class="ck"><b></b></div>
<div class="c" style="left:60px;width:60px"><i class="n">0001</i></div>
<div class="c" style="left:120px;width:100px">분당점<i class="n"> 3</i>층</div>
<div class="c" style="left:220px;width:60px"><i class="n">00063</i></div>
<div class="c" style="left:280px;width:100px">한국캘러웨이골프<i class="n">(</i>유<i class="n">)</i></div>
<div class="c" style="left:380px;width:80px"><i class="n">0001</i></div>
<div class="c" style="left:460px;width:80px">캘러웨이</div>
<div class="c" style="left:540px;width:100px"><i class="n">20170628</i></div>
<div class="c" style="left:640px;width:40px"><i class="n">00003</i></div>
<div class="c" style="left:680px;width:40px"><i class="n">001</i></div>
<div class="c" style="left:720px;width:80px">출고</div>
<div class="c" style="left:800px;width:80px">주문확정</div>
<div class="c" style="left:880px;width:80px">주문출고</div>
<div class="c" style="left:960px;width:80px">물류창고</div>
<div class="c" style="left:1040px;width:80px"><i class="n">1200003600</i></div>
<div class="c" style="left:1120px;width:150px"><i class="a">IR RH RAZR X FORGED4P STEEL</i></div>
<div class="c" style="left:1270px;width:80px">골프클럽</div>
<div class="c" style="left:1350px;width:80px">아이언</div>
<div class="c" style="left:1430px;width:80px">경량스틸</div>
<div class="c" style="left:1510px;width:80px"></div>
<div class="c" style="left:1590px;width:100px"><i class="m">1ACW00000066</i></div>
<div class="c" style="left:1690px;width:40px"><i class="a">XX</i></div>
<div class="c" style="left:1730px;width:40px"><i class="n">00</i></div>
<div class="c" style="left:1770px;width:100px"></div>
<div class="c ra" style="left:1870px;width:60px"><i class="n">1</i></div>
<div class="c ra" style="left:1930px;width:80px"><i class="n">1,200,000</i></div>
<div class="c ra" style="left:2010px;width:80px"><i class="n">120,000</i></div>
<div class="c" style="left:2090px;width:80px"></div>
<div class="c" style="left:2170px;width:80px"></div>
<div class="c" style="left:2250px;width:20px"></div>
</div>
<div class="r e" style="top:273px">
<div class="rh"><i class="n">14</i></div><div class="ck"><b></b></div>
<div class="c" style="left:60px;width:60px"><i class="n">0001</i></div>
<div class="c" style="left:120px;width:100px">분당점<i class="n"> 3</i>층</div>
<div class="c" style="left:220px;width:60px"><i class="n">00050</i></div>
<div class="c" style="left:280px;width:100px"><i class="n">(</i>주<i class="n">)</i>화운더스클럽</div>
<div class="c" style="left:380px;width:80px"><i class="n">0001</i></div>
<div class="c" style="left:460px;width:80px">화운더스</div>
<div class="c" style="left:540px;width:100px"><i class="n">20170628</i></div>
<div class="c" style="left:640px;width:40px"><i class="n">00005</i></div>
<div class="c" style="left:680px;width:40px"><i class="n">001</i></div>
<div class="c" style="left:720px;width:80px">출고</div>
<div class="c" style="left:800px;width:80px">주문확정</div>
<div class="c" style="left:880px;width:80px">주문출고</div>
<div class="c" style="left:960px;width:80px">물류창고</div>
<div class="c" style="left:1040px;width:80px"><i class="n">1200001500</i></div>
<div class="c" style="left:1120px;width:150px"><i class="a">DR Laser Beam</i></div>
<div class="c" style="left:1270px;width:80px">골프클럽</div>
<div class="c" style="left:1350px;width:80px">드라이버</div>
<div class="c" style="left:1430px;width:80px">드라이버</div>
<div class="c" style="left:1510px;width:80px"></div>
<div class="c" style="left:1590px;width:100px"><i class="m">1BFD000000019</i></div>
<div class="c" style="left:1690px;width:40px"><i class="a">XX</i></div>
<div class="c" style="left:1730px;width:40px"><i class="n">00</i></div>
<div class="c" style="left:1770px;width:100px"></div>
<div class="c ra" style="left:1870px;width:60px"><i class="n">1</i></div>
<div class="c ra" style="left:1930px;width:80px"><i class="n">10,909</i></div>
<div class="c ra" style="left:2010px;width:80px"><i class="n">1,091</i></div>
<div class="c" style="left:2090px;width:80px"></div>
<div class="c" style="left:2170px;width:80px"></div>
<div class="c" style="left:2250px;width:20px"></div>
</div>
<div class="r o" style="top:294px">
<div class="rh"><i class="n">15</i></div><div class="ck"><b></b></div>
<div class="c" style="left:60px;width:60px"><i class="n">0001</i></div>
<div class="c" style="left:120px;width:100px">분당점<i class="n"> 3</i>층</div>
<div class="c" style="left:220px;width:60px"><i class="n">00063</i></div>
<div class="c" style="left:280px;width:100px">한국캘러웨이골프<i class="n">(</i>유<i class="n">)</i></div>
<div class="c" style="left:380px;width:80px"><i class="n">0001</i></div>
<div class="c" style="left:460px;width:80px">캘러웨이</div>
<div class="c" style="left:540px;width:100px"><i class="n">20170628</i></div>
<div class="c" style="left:640px;width:40px"><i class="n">00006</i></div>
<div class="c" style="left:680px;width:40px"><i class="n">001</i></div>
<div class="c" style="left:720px;width:80px">출고</div>
<div class="c" style="left:800px;width:80px">주문확정</div>
<div class="c" style="left:880px;width:80px">주문출고</div>
<div class="c" style="left:960px;width:80px">물류창고</div>
<div class="c" style="left:1040px;width:80px"><i class="n">1200003600</i></div>
<div class="c" style="left:1120px;width:150px"><i class="a">IR RH RAZR X FORGED4P STEEL</i></div>
<div class="c" style="left:1270px;width:80px">골프클럽</div>
<div class="c" style="left:1350px;width:80px">아이언</div>
<div class="c" style="left:1430px;width:80px">경량스틸</div>
<div class="c" style="left:1510px;width:80px"></div>
<div class="c" style="left:1590px;width:100px"><i class="m">1ACW00000066</i></div>
<div class="c" style="left:1690px;width:40px"><i class="a">XX</i></div>
<div class="c" style="left:1730px;width:40px"><i class="n">00</i></div>
<div class="c" style="left:1770px;width:100px"></div>
<div class="c ra" style="left:1870px;width:60px"><i class="n">1</i></div>
<div class="c ra" style="left:1930px;width:80px"><i class="n">1,200,000</i></div>
<div class="c ra" style="left:2010px;width:80px"><i class="n">120,000</i></div>
<div class="c" style="left:2090px;width:80px"></div>
<div class="c" style="left:2170px;width:80px"></div>
<div class="c" style="left:2250px;width:20px"></div>
</div>
<div class="r e" style="top:315px">
<div class="rh"><i class="n">16</i></div><div class="ck"><b></b></div>
<div class="c" style="left:60px;width:60px"><i class="n">0001</i></div>
<div class="c" style="left:120px;width:100px">분당점<i class="n"> 3</i>층</div>
<div class="c" style="left:220px;width:60px"><i class="n">00063</i></div>
<div class="c" style="left:280px;width:100px">한국캘러웨이골프<i class="n">(</i>유<i class="n">)</i></div>
<div class="c" style="left:380px;width:80px"><i class="n">0001</i></div>
<div class="c" style="left:460px;width:80px">캘러웨이</div>
<div class="c" style="left:540px;width:100px"><i class="n">20170628</i></div>
<div class="c" style="left:640px;width:40px"><i class="n">00059</i></div>
<div class="c" style="left:680px;width:40px"><i class="n">001</i></div>
<div class="c" style="left:720px;width:80px">출고</div>
<div class="c" style="left:800px;width:80px">주문확정</div>
<div class="c" style="left:880px;width:80px">주문출고</div>
<div class="c" style="left:960px;width:80px">물류창고</div>
<div class="c" style="left:1040px;width:80px"><i class="n">1200003600</i></div>
<div class="c" style="left:1120px;width:150px"><i class="a">IR RH RAZR X FORGED4P STEEL</i></div>
<div class="c" style="left:1270px;width:80px">골프클럽</div>
<div class="c" style="left:1350px;width:80px">아이언</div>
<div class="c" style="left:1430px;width:80px">경량스틸</div>
<div class="c" style="left:1510px;width:80px"></div>
<div class="c" style="left:1590px;width:100px"><i class="m">1ACW00000066</i></div>
<div class="c" style="left:1690px;width:40px"><i class="a">XX</i></div>
<div class="c" style="left:1730px;width:40px"><i class="n">00</i></div>
<div class="c" style="left:1770px;width:100px"></div>
<div class="c ra" style="left:1870px;width:60px"><i class="n">1</i></div>
<div class="c ra" style="left:1930px;width:80px"><i class="n">1,200,000</i></div>
<div class="c ra" style="left:2010px;width:80px"><i class="n">120,000</i></div>
<div class="c" style="left:2090px;width:80px"></div>
<div class="c" style="left:2170px;width:80px"></div>
<div class="c" style="left:2250px;width:20px"></div>
</div>
<div class="r o" style="top:336px">
<div class="rh"><i class="n">17</i></div><div class="ck"><b></b></div>
<div class="c" style="left:60px;width:60px"><i class="n">0001</i></div>
<div class="c" style="left:120px;width:100px">분당점<i class="n"> 3</i>층</div>
<div class="c" style="left:220px;width:60px"><i class="n">00061</i></div>
<div class="c" style="left:280px;width:100px"><i class="n">(</i>유<i class="n">)</i>테일러메이드코리아</div>
<div class="c" style="left:380px;width:80px"><i class="n">0001</i></div>
<div class="c" style="left:460px;width:80px">테일러메이드</div>
<div class="c" style="left:540px;width:100px"><i class="n">20170628</i></div>
<div class="c" style="left:640px;width:40px"><i class="n">00112</i></div>
<div class="c" style="left:680px;width:40px"><i class="n">001</i></div>
<div class="c" style="left:720px;width:80px">출고</div>
<div class="c" style="left:800px;width:80px">주문확정</div>
<div class="c" style="left:880px;width:80px">주문출고</div>
<div class="c" style="left:960px;width:80px">물류창고</div>
<div class="c" style="left:1040px;width:80px"><i class="n">1200011900</i></div>
<div class="c" style="left:1120px;width:150px"><i class="a">FS FW PERFICA PERFICA</i></div>
<div class="c" style="left:1270px;width:80px">골프클럽</div>
<div class="c" style="left:1350px;width:80px">우드</div>
<div class="c" style="left:1430px;width:80px">페이웨이우드</div>
<div class="c" style="left:1510px;width:80px"></div>
<div class="c" style="left:1590px;width:100px"><i class="m">1ATM000000063</i></div>
<div class="c" style="left:1690px;width:40px"><i class="a">XX</i></div>
<div class="c" style="left:1730px;width:40px"><i class="n">00</i></div>
<div class="c" style="left:1770px;width:100px"></div>
<div class="c ra" style="left:1870px;width:60px"><i class="n">1</i></div>
<div class="c ra" style="left:1930px;width:80px"><i class="n">130,909</i></div>
<div class="c ra" style="left:2010px;width:80px"><i class="n">13,091</i></div>
<div class="c" style="left:2090px;width:80px"></div>
<div class="c" style="left:2170px;width:80px"></div>
<div class="c" style="left:2250px;width:20px"></div>
</div>
<div class="r e" style="top:357px">
<div class="rh"><i class="n">18</i></div><div class="ck"><b></b></div>
<div class="c" style="left:60px;width:60px"><i class="n">0001</i></div>
<div class="c" style="left:120px;width:100px">분당점<i class="n"> 3</i>층</div>
<div class="c" style="left:220px;width:60px"><i class="n">00063</i></div>
<div class="c" style="left:280px;width:100px">한국캘러웨이골프<i class="n">(</i>유<i class="n">)</i></div>
<div class="c" style="left:380px;width:80px"><i class="n">0001</i></div>
<div class="c" style="left:460px;width:80px">캘러웨이</div>
<div class="c" style="left:540px;width:100px"><i class="n">20180405</i></div>
<div class="c" style="left:640px;width:40px"><i class="n">00001</i></div>
<div class="c" style="left:680px;width:40px"><i class="n">001</i></div>
<div class="c" style="left:720px;width:80px">출고</div>
<div class="c" style="left:800px;width:80px">주문확정</div>
<div class="c" style="left:880px;width:80px">주문출고</div>
<div class="c" style="left:960px;width:80px">물류창고</div>
<div class="c" style="left:1040px;width:80px"><i class="n">1200003700</i></div>
<div class="c" style="left:1120px;width:150px"><i class="a">IR RH RAZR X FORGED4P STEEL</i></div>
<div class="c" style="left:1270px;width:80px">골프클럽</div>
<div class="c" style="left:1350px;width:80px">아이언</div>
<div class="c" style="left:1430px;width:80px">경량스틸</div>
<div class="c" style="left:1510px;width:80px"></div>
<div class="c" style="left:1590px;width:100px"><i class="m">1ACW00000067</i></div>
<div class="c" style="left:1690px;width:40px"><i class="a">XX</i></div>
<div class="c" style="left:1730px;width:40px"><i class="n">00</i></div>
<div class="c" style="left:1770px;width:100px"></div>
<div class="c ra" style="left:1870px;width:60px"><i class="n">18</i></div>
<div class="c ra" style="left:1930px;width:80px"><i class="n">21,600,000</i></div>
<div class="c ra" style="left:2010px;width:80px"><i class="n">2,160,000</i></div>
<div class="c" style="left:2090px;width:80px"></div>
<div class="c" style="left:2170px;width:80px"></div>
<div class="c" style="left:2250px;width:20px"></div>
</div>
<div class="r o" style="top:378px">
<div class="rh"><i class="n">19</i></div><div class="ck"><b></b></div>
<div class="c" style="left:60px;width:60px"><i class="n">0001</i></div>
<div class="c" style="left:120px;width:100px">분당점<i class="n"> 3</i>층</div>
<div class="c" style="left:220px;width:60px"><i class="n">00007</i></div>
<div class="c" style="left:280px;width:100px"><i class="n">(</i>주<i class="n">)</i>썬덜랜드코리아<i class="n">(</i>주<i class="n">)</i></div>
<div class="c" style="left:380px;width:80px"><i class="n">0001</i></div>
<div class="c" style="left:460px;width:80px">썬더랜드</div>
<div class="c" style="left:540px;width:100px"><i class="n">20180601</i></div>
<div class="c" style="left:640px;width:40px"><i class="n">00001</i></div>
<div class="c" style="left:680px;width:40px"><i class="n">001</i></div>
<div class="c" style="left:720px;width:80px">출고</div>
<div class="c" style="left:800px;width:80px">주문확정</div>
<div class="c" style="left:880px;width:80px">주문출고</div>
<div class="c" style="left:960px;width:80px">물류창고</div>
<div class="c" style="left:1040px;width:80px"><i class="n">1201285101</i></div>
<div class="c" style="left:1120px;width:150px"><i class="a">HUVAS GLOVE </i>반양피<i class="a">22 WH</i></div>
<div class="c" style="left:1270px;width:80px">골프용품</div>
<div class="c" style="left:1350px;width:80px">장갑</div>
<div class="c" style="left:1430px;width:80px">반양피</div>
<div class="c" style="left:1510px;width:80px"></div>
<div class="c" style="left:1590px;width:100px"><i class="n">1201285101000</i></div>
<div class="c" style="left:1690px;width:40px"><i class="a">XX</i></div>
<div class="c" style="left:1730px;width:40px"><i class="n">000</i></div>
<div class="c" style="left:1770px;width:100px"></div>
<div class="c ra" style="left:1870px;width:60px"><i class="n">2</i></div>
<div class="c ra" style="left:1930px;width:80px"><i class="n">10,909</i></div>
<div class="c ra" style="left:2010px;width:80px"><i class="n">1,091</i></div>
<div class="c" style="left:2090px;width:80px"></div>
<div class="c" style="left:2170px;width:80px"></div>
<div class="c" style="left:2250px;width:20px"></div>
</div>
<div class="r e" style="top:399px">
<div class="rh"><i class="n">20</i></div><div class="ck"><b></b></div>
<div class="c" style="left:60px;width:60px"><i class="n">0001</i></div>
<div class="c" style="left:120px;width:100px">분당점<i class="n"> 3</i>층</div>
<div class="c" style="left:220px;width:60px"><i class="n">00062</i></div>
<div class="c" style="left:280px;width:100px">피지스포츠</div>
<div class="c" style="left:380px;width:80px"><i class="n">0001</i></div>
<div class="c" style="left:460px;width:80px">피지스포츠</div>
<div class="c" style="left:540px;width:100px"><i class="n">20180601</i></div>
<div class="c" style="left:640px;width:40px"><i class="n">00002</i></div>
<div class="c" style="left:680px;width:40px"><i class="n">001</i></div>
<div class="c" style="left:720px;width:80px">출고</div>
<div class="c" style="left:800px;width:80px">주문확정</div>
<div class="c" style="left:880px;width:80px">주문출고</div>
<div class="c" style="left:960px;width:80px">물류창고</div>
<div class="c" style="left:1040px;width:80px"><i class="n">1200000100</i></div>
<div class="c" style="left:1120px;width:150px"><i class="a">BL DT SOLO 2</i>피스</div>
<div class="c" style="left:1270px;width:80px">골프용품</div>
<div class="c" style="left:1350px;width:80px">골프공</div>
<div class="c" style="left:1430px;width:80px">정상</div>
<div class="c" style="left:1510px;width:80px"></div>
<div class="c" style="left:1590px;width:100px"><i class="n">dddddddddddddddddd</i></div>
<div class="c" style="left:1690px;width:40px"><i class="a">XX</i></div>
<div class="c" style="left:1730px;width:40px"><i class="n">00</i></div>
<div class="c" style="left:1770px;width:100px"></div>
<div class="c ra" style="left:1870px;width:60px"><i class="n">1</i></div>
<div class="c ra" style="left:1930px;width:80px"><i class="n">35,636</i></div>
<div class="c ra" style="left:2010px;width:80px"><i class="n">3,564</i></div>
<div class="c" style="left:2090px;width:80px"></div>
<div class="c" style="left:2170px;width:80px"></div>
<div class="c" style="left:2250px;width:20px"></div>
</div>
<div class="r o" style="top:420px">
<div class="rh"><i class="n">21</i></div><div class="ck"><b></b></div>
<div class="c" style="left:60px;width:60px"><i class="n">0001</i></div>
<div class="c" style="left:120px;width:100px">분당점<i class="n"> 3</i>층</div>
<div class="c" style="left:220px;width:60px"><i class="n">00050</i></div>
<div class="c" style="left:280px;width:100px"><i class="n">(</i>주<i class="n">)</i>화운더스클럽</div>
<div class="c" style="left:380px;width:80px"><i class="n">0001</i></div>
<div class="c" style="left:460px;width:80px">화운더스</div>
<div class="c" style="left:540px;width:100px"><i class="n">20180601</i></div>
<div class="c" style="left:640px;width:40px"><i class="n">00002</i></div>
<div class="c" style="left:680px;width:40px"><i class="n">002</i></div>
<div class="c" style="left:720px;width:80px">출고</div>
<div class="c" style="left:800px;width:80px">주문확정</div>
<div class="c" style="left:880px;width:80px">주문출고</div>
<div class="c" style="left:960px;width:80px">물류창고</div>
<div class="c" style="left:1040px;width:80px"><i class="n">1200001500</i></div>
<div class="c" style="left:1120px;width:150px"><i class="a">DR Laser Beam</i></div>
<div class="c" style="left:1270px;width:80px">골프클럽</div>
<div class="c" style="left:1350px;width:80px">드라이버</div>
<div class="c" style="left:1430px;width:80px">드라이버</div>
<div class="c" style="left:1510px;width:80px"></div>
<div class="c" style="left:1590px;width:100px"><i class="m">1BFD000000019</i></div>
<div class="c" style="left:1690px;width:40px"><i class="a">XX</i></div>
<div class="c" style="left:1730px;width:40px"><i class="n">00</i></div>
<div class="c" style="left:1770px;width:100px"></div>
<div class="c ra" style="left:1870px;width:60px"><i class="n">3</i></div>
<div class="c ra" style="left:1930px;width:80px"><i class="n">32,727</i></div>
<div class="c ra" style="left:2010px;width:80px"><i class="n">3,273</i></div>
<div class="c" style="left:2090px;width:80px"></div>
<div class="c" style="left:2170px;width:80px"></div>
<div class="c" style="left:2250px;width:20px"></div>
</div>
<div class="r e" style="top:441px">
<div class="rh"><i class="n">22</i></div><div class="ck"><b></b></div>
<div class="c" style="left:60px;width:60px"><i class="n">0001</i></div>
<div class="c" style="left:120px;width:100px">분당점<i class="n"> 3</i>층</div>
<div class="c" style="left:220px;width:60px"><i class="n">00063</i></div>
<div class="c" style="left:280px;width:100px">한국캘러웨이골프<i class="n">(</i>유<i class="n">)</i></div>
<div class="c" style="left:380px;width:80px"><i class="n">0001</i></div>
<div class="c" style="left:460px;width:80px">캘러웨이</div>
<div class="c" style="left:540px;width:100px"><i class="n">20180601</i></div>
<div class="c" style="left:640px;width:40px"><i class="n">00004</i></div>
<div class="c" style="left:680px;width:40px"><i class="n">001</i></div>
<div class="c" style="left:720px;width:80px">출고</div>
<div class="c" style="left:800px;width:80px">주문확정</div>
<div class="c" style="left:880px;width:80px">주문출고</div>
<div class="c" style="left:960px;width:80px">물류창고</div>
<div class="c" style="left:1040px;width:80px"><i class="n">1200003600</i></div>
<div class="c" style="left:1120px;width:150px"><i class="a">IR RH RAZR X FORGED4P STEEL</i></div>
<div class="c" style="left:1270px;width:80px">골프클럽</div>
<div class="c" style="left:1350px;width:80px">아이언</div>
<div class="c" style="left:1430px;width:80px">경량스틸</div>
<div class="c" style="left:1510px;width:80px"></div>
<div class="c" style="left:1590px;width:100px"><i class="m">1ACW00000066</i></div>
<div class="c" style="left:1690px;width:40px"><i class="a">XX</i></div>
<div class="c" style="left:1730px;width:40px"><i class="n">00</i></div>
<div class="c" style="left:1770px;width:100px"></div>
<div class="c ra" style="left:1870px;width:60px"><i class="n">1</i></div>
<div class="c ra" style="left:1930px;width:80px"><i class="n">1,200,000</i></div>
<div class="c ra" style="left:2010px;width:80px"><i class="n">120,000</i></div>
<div class="c" style="left:2090px;width:80px"></div>
<div class="c" style="left:2170px;width:80px"></div>
<div class="c" style="left:2250px;width:20px"></div>
</div>
<div class="r o" style="top:462px">
<div class="rh"><i class="n">23</i></div><div class="ck"><b></b></div>
<div class="c" style="left:60px;width:60px"><i class="n">0001</i></div>
<div class="c" style="left:120px;width:100px">분당점<i class="n"> 3</i>층</div>
<div class="c" style="left:220px;width:60px"><i class="n">00063</i></div>
<div class="c" style="left:280px;width:100px">한국캘러웨이골프<i class="n">(</i>유<i class="n">)</i></div>
<div class="c" style="left:380px;width:80px"><i class="n">0001</i></div>
<div class="c" style="left:460px;width:80px">캘러웨이</div>
<div class="c" style="left:540px;width:100px"><i class="n">20180601</i></div>
<div class="c" style="left:640px;width:40px"><i class="n">00006</i></div>
<div class="c" style="left:680px;width:40px"><i class="n">001</i></div>
<div class="c" style="left:720px;width:80px">출고</div>
<div class="c" style="left:800px;width:80px">주문확정</div>
<div class="c" style="left:880px;width:80px">주문출고</div>
<div class="c" style="left:960px;width:80px">물류창고</div>
<div class="c" style="left:1040px;width:80px"><i class="n">1200003600</i></div>
<div class="c" style="left:1120px;width:150px"><i class="a">IR RH RAZR X FORGED4P STEEL</i></div>
<div class="c" style="left:1270px;width:80px">골프클럽</div>
<div class="c" style="left:1350px;width:80px">아이언</div>
<div class="c" style="left:1430px;width:80px">경량스틸</div>
<div class="c" style="left:1510px;width:80px"></div>
<div class="c" style="left:1590px;width:100px"><i class="m">1ACW00000066</i></div>
<div class="c" style="left:1690px;width:40px"><i class="a">XX</i></div>
<div class="c" style="left:1730px;width:40px"><i class="n">00</i></div>
<div class="c" style="left:1770px;width:100px"></div>
<div class="c ra" style="left:1870px;width:60px"><i class="n">1</i></div>
<div class="c ra" style="left:1930px;width:80px"><i class="n">1,200,000</i></div>
<div class="c ra" style="left:2010px;width:80px"><i class="n">120,000</i></div>
<div class="c" style="left:2090px;width:80px"></div>
<div class="c" style="left:2170px;width:80px"></div>
<div class="c" style="left:2250px;width:20px"></div>
</div>
<div class="r e" style="top:483px">
<div class="rh"><i class="n">24</i></div><div class="ck"><b></b></div>
<div class="c" style="left:60px;width:60px"><i class="n">0001</i></div>
<div class="c" style="left:120px;width:100px">분당점<i class="n"> 3</i>층</div>
<div class="c" style="left:220px;width:60px"><i class="n">00062</i></div>
<div class="c" style="left:280px;width:100px">피지스포츠</div>
<div class="c" style="left:380px;width:80px"><i class="n">0001</i></div>
<div class="c" style="left:460px;width:80px">피지스포츠</div>
<div class="c" style="left:540px;width:100px"><i class="n">20180601</i></div>
<div class="c" style="left:640px;width:40px"><i class="n">00007</i></div>
<div class="c" style="left:680px;width:40px"><i class="n">001</i></div>
<div class="c" style="left:720px;width:80px">출고</div>
<div class="c" style="left:800px;width:80px">주문확정</div>
<div class="c" style="left:880px;width:80px">주문출고</div>
<div class="c" style="left:960px;width:80px">물류창고</div>
<div class="c" style="left:1040px;width:80px"><i class="n">1200000100</i></div>
<div class="c" style="left:1120px;width:150px"><i class="a">BL DT SOLO 2</i>피스</div>
<div class="c" style="left:1270px;width:80px">골프용품</div>
<div class="c" style="left:1350px;width:80px">골프공</div>
<div class="c" style="left:1430px;width:80px">정상</div>
<div class="c" style="left:1510px;width:80px"></div>
<div class="c" style="left:1590px;width:100px"><i class="n">dddddddddddddddddd</i></div>
<div class="c" style="left:1690px;width:40px"><i class="a">XX</i></div>
<div class="c" style="left:1730px;width:40px"><i class="n">00</i></div>
<div class="c" style="left:1770px;width:100px"></div>
<div class="c ra" style="left:1870px;width:60px"><i class="n">1</i></div>
<div class="c ra" style="left:1930px;width:80px"><i class="n">35,636</i></div>
<div class="c ra" style="left:2010px;width:80px"><i class="n">3,564</i></div>
<div class="c" style="left:2090px;width:80px"></div>
<div class="c" style="left:2170px;width:80px"></div>
<div class="c" style="left:2250px;width:20px"></div>
</div>
<div class="r o" style="top:504px">
<div class="rh"><i class="n">25</i></div><div class="ck"><b></b></div>
<div class="c" style="left:60px;width:60px"><i class="n">0001</i></div>
<div class="c" style="left:120px;width:100px">분당점<i class="n"> 3</i>층</div>
<div class="c" style="left:220px;width:60px"><i class="n">00062</i></div>
<div class="c" style="left:280px;width:100px">피지스포츠</div>
<div class="c" style="left:380px;width:80px"><i class="n">0001</i></div>
<div class="c" style="left:460px;width:80px">피지스포츠</div>
<div class="c" style="left:540px;width:100px"><i class="n">20180601</i></div>
<div class="c" style="left:640px;width:40px"><i class="n">00008</i></div>
<div class="c" style="left:680px;width:40px"><i class="n">001</i></div>
<div class="c" style="left:720px;width:80px">출고</div>
<div class="c" style="left:800px;width:80px">주문확정</div>
<div class="c" style="left:880px;width:80px">주문출고</div>
<div class="c" style="left:960px;width:80px">물류창고</div>
<div class="c" style="left:1040px;width:80px"><i class="n">1200000100</i></div>
<div class="c" style="left:1120px;width:150px"><i class="a">BL DT SOLO 2</i>피스</div>
<div class="c" style="left:1270px;width:80px">골프용품</div>
<div class="c" style="left:1350px;width:80px">골프공</div>
<div class="c" style="left:1430px;width:80px">정상</div>
<div class="c" style="left:1510px;width:80px"></div>
<div class="c" style="left:1590px;width:100px"><i class="n">dddddddddddddddddd</i></div>
<div class="c" style="left:1690px;width:40px"><i class="a">XX</i></div>
<div class="c" style="left:1730px;width:40px"><i class="n">00</i></div>
<div class="c" style="left:1770px;width:100px"></div>
<div class="c ra" style="left:1870px;width:60px"><i class="n">1</i></div>
<div class="c ra" style="left:1930px;width:80px"><i class="n">35,636</i></div>
<div class="c ra" style="left:2010px;width:80px"><i class="n">3,564</i></div>
<div class="c" style="left:2090px;width:80px"></div>
<div class="c" style="left:2170px;width:80px"></div>
<div class="c" style="left:2250px;width:20px"></div>
</div>
<div class="r e" style="top:525px">
<div class="rh"><i class="n">26</i></div><div class="ck"><b></b></div>
<div class="c" style="left:60px;width:60px"><i class="n">0001</i></div>
<div class="c" style="left:120px;width:100px">분당점<i class="n"> 3</i>층</div>
<div class="c" style="left:220px;width:60px"><i class="n">00062</i></div>
<div class="c" style="left:280px;width:100px">피지스포츠</div>
<div class="c" style="left:380px;width:80px"><i class="n">0001</i></div>
<div class="c" style="left:460px;width:80px">피지스포츠</div>
<div class="c" style="left:540px;width:100px"><i class="n">20180601</i></div>
<div class="c" style="left:640px;width:40px"><i class="n">00009</i></div>
<div class="c" style="left:680px;width:40px"><i class="n">001</i></div>
<div class="c" style="left:720px;width:80px">출고</div>
<div class="c" style="left:800px;width:80px">주문확정</div>
<div class="c" style="left:880px;width:80px">주문출고</div>
<div class="c" style="left:960px;width:80px">물류창고</div>
<div class="c" style="left:1040px;width:80px"><i class="n">1200000100</i></div>
<div class="c" style="left:1120px;width:150px"><i class="a">BL DT SOLO 2</i>피스</div>
<div class="c" style="left:1270px;width:80px">골프용품</div>
<div class="c" style="left:1350px;width:80px">골프공</div>
<div class="c" style="left:1430px;width:80px">정상</div>
<div class="c" style="left:1510px;width:80px"></div>
<div class="c" style="left:1590px;width:100px"><i class="n">dddddddddddddddddd</i></div>
<div class="c" style="left:1690px;width:40px"><i class="a">XX</i></div>
<div class="c" style="left:1730px;width:40px"><i class="n">00</i></div>
<div class="c" style="left:1770px;width:100px"></div>
<div class="c ra" style="left:1870px;width:60px"><i class="n">1</i></div>
<div class="c ra" style="left:1930px;width:80px"><i class="n">35,636</i></div>
<div class="c ra" style="left:2010px;width:80px"><i class="n">3,564</i></div>
<div class="c" style="left:2090px;width:80px"></div>
<div class="c" style="left:2170px;width:80px"></div>
<div class="c" style="left:2250px;width:20px"></div>
</div>
<div class="selline"></div>
</div>
<div class="ft">
<div class="fc" style="left:0;width:40px;text-align:center"><span class="sig">Σ</span></div>
<div class="fc" style="left:40px;width:20px"></div>
<div class="fc" style="left:60px;width:60px"></div>
<div class="fc" style="left:120px;width:100px"></div>
<div class="fc" style="left:220px;width:60px"></div>
<div class="fc" style="left:280px;width:100px"></div>
<div class="fc" style="left:380px;width:80px"></div>
<div class="fc" style="left:460px;width:80px"></div>
<div class="fc" style="left:540px;width:100px"></div>
<div class="fc" style="left:640px;width:40px"></div>
<div class="fc" style="left:680px;width:40px"></div>
<div class="fc" style="left:720px;width:80px"></div>
<div class="fc" style="left:800px;width:80px"></div>
<div class="fc" style="left:880px;width:80px"></div>
<div class="fc" style="left:960px;width:80px"></div>
<div class="fc" style="left:1040px;width:80px"></div>
<div class="fc" style="left:1120px;width:150px"></div>
<div class="fc" style="left:1270px;width:80px"></div>
<div class="fc" style="left:1350px;width:80px"></div>
<div class="fc" style="left:1430px;width:80px"></div>
<div class="fc" style="left:1510px;width:80px"></div>
<div class="fc" style="left:1590px;width:100px"></div>
<div class="fc" style="left:1690px;width:40px"></div>
<div class="fc" style="left:1730px;width:40px"></div>
<div class="fc" style="left:1770px;width:100px"></div>
<div class="fc ra" style="left:1870px;width:60px"><i class="n">431</i></div>
<div class="fc ra" style="left:1930px;width:80px"><i class="n">279,566,148</i></div>
<div class="fc ra" style="left:2010px;width:80px"><i class="n">27,956,623</i></div>
<div class="fc" style="left:2090px;width:80px"></div>
<div class="fc" style="left:2170px;width:80px"></div>
<div class="fc last" style="left:2250px;width:20px"></div>
</div>
<div class="vs"><div class="ar up"></div><div class="th"></div><div class="ar dn"></div></div>
<div class="hs"><div class="ar lf"></div><div class="th"></div><div class="ar rt"></div></div>
</div>
<div id="pg"><svg width="150" height="18" viewBox="0 0 150 18"><path d="M8 0.5 L0.5 8 L8 16 M15 0.5 L7.5 8 L15 16 M31 0.5 L22.5 8 L31 16 M114 0.5 L122 8 L114 16 M129 0.5 L137 8 L129 16 M136 0.5 L144 8 L136 16" fill="none" stroke="#8f8f8f" stroke-width="1.25"/></svg><span>Page 1 of 1</span></div>

</body></html>
